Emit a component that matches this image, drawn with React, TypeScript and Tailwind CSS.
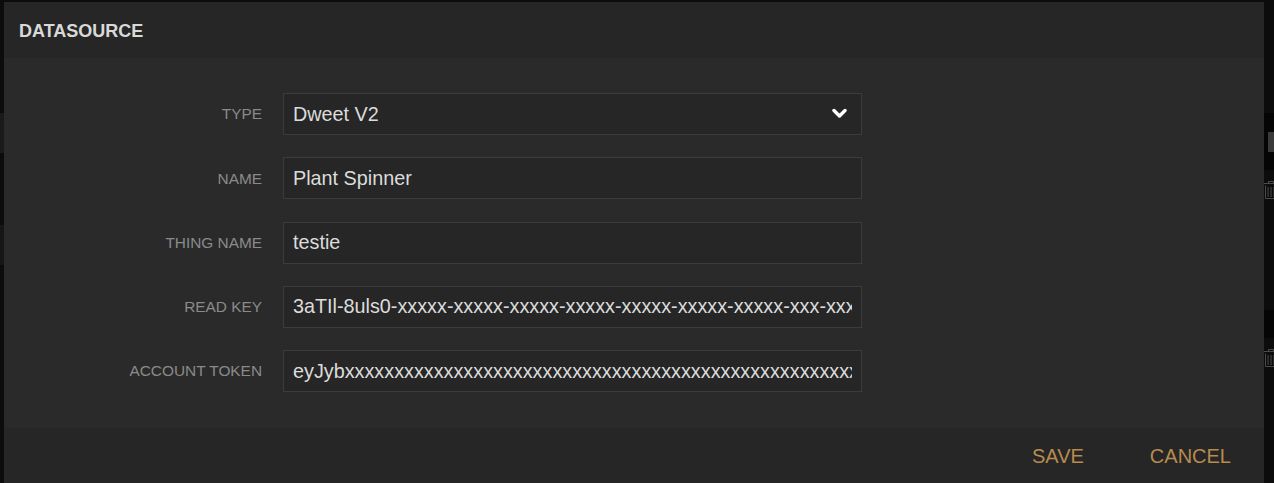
import React from "react";

const rows = [
  { label: "TYPE", value: "Dweet V2", select: true },
  { label: "NAME", value: "Plant Spinner" },
  { label: "THING NAME", value: "testie" },
  {
    label: "READ KEY",
    value:
      "3aTIl-8uls0-xxxxx-xxxxx-xxxxx-xxxxx-xxxxx-xxxxx-xxxxx-xxx-xxx-xxxxx-xxxxx",
  },
  {
    label: "ACCOUNT TOKEN",
    value: "eyJyb" + "x".repeat(90),
  },
];

function Trash() {
  return (
    <svg width="14" height="18" viewBox="0 0 14 18" fill="none" stroke="#4a4a4a" strokeWidth="1">
      <path d="M4.5 2.5V0.5H9.5V2.5" />
      <path d="M0 2.5H14" />
      <path d="M1.5 4.5V17.5H12.5V4.5" />
      <path d="M4 6V16M7 6V16M10 6V16" />
    </svg>
  );
}

export default function App() {
  return (
    <div
      className="relative h-[483px] w-[1274px] overflow-hidden bg-[#0c0c0c]"
      style={{ fontFamily: '"Liberation Sans", Arial, sans-serif' }}
    >
      {/* page content peeking out behind the dialog */}
      <div className="absolute right-0 top-[113px] h-[57px] w-[10px] bg-[#050505]" />
      <div className="absolute right-0 top-[132px] h-[20px] w-[6px] bg-[#3a3a3a]" />
      <div className="absolute left-[1264px] top-[181px]">
        <Trash />
      </div>
      <div className="absolute right-0 top-[310px] h-[28px] w-[10px] bg-[#050505]" />
      <div className="absolute left-[1264px] top-[349px]">
        <Trash />
      </div>
      <div className="absolute left-0 top-[113px] h-[40px] w-[4px] bg-[#1a1a1a]" />
      <div className="absolute left-0 top-[225px] h-[40px] w-[4px] bg-[#161616]" />

      {/* dialog */}
      <div className="absolute left-[4px] top-[2px] flex h-[481px] w-[1260px] flex-col bg-[#2a2a2a]">
        <div className="flex h-[56px] shrink-0 items-center bg-[#262626] pl-[15px]">
          <h2 className="pt-[1px] text-[18px] font-bold leading-none text-[#d9d9d9]">
            DATASOURCE
          </h2>
        </div>

        <div className="flex flex-1 flex-col gap-[22.3px] pt-[35px]">
          {rows.map((r) => (
            <div key={r.label} className="flex items-center">
              <label className="w-[258px] text-right text-[15.4px] leading-none text-[#8a8a8a]">
                {r.label}
              </label>
              <div className="relative ml-[21px] h-[42px] w-[579px]">
                <input
                  readOnly
                  value={r.value}
                  className="h-full w-full border border-[#3b3b3b] bg-[#262626] pl-[9px] pr-[9px] text-[19.8px] text-[#dcdcdc] outline-none"
                  style={{ fontFamily: '"Liberation Sans", Arial, sans-serif' }}
                />
                {r.select && (
                  <svg
                    className="absolute right-[15px] top-[15px]"
                    width="15"
                    height="11"
                    viewBox="0 0 15 11"
                    fill="none"
                  >
                    <path
                      d="M2 2.5L7.5 8L13 2.5"
                      stroke="#ffffff"
                      strokeWidth="3.4"
                      strokeLinecap="round"
                      strokeLinejoin="round"
                    />
                  </svg>
                )}
              </div>
            </div>
          ))}
        </div>

        <div className="flex h-[55px] shrink-0 items-center justify-end gap-[66px] bg-[#262626] pr-[33px]">
          <button className="text-[20px] leading-none text-[#b88b4f]">SAVE</button>
          <button className="text-[20px] leading-none text-[#b88b4f]">CANCEL</button>
        </div>
      </div>
    </div>
  );
}
